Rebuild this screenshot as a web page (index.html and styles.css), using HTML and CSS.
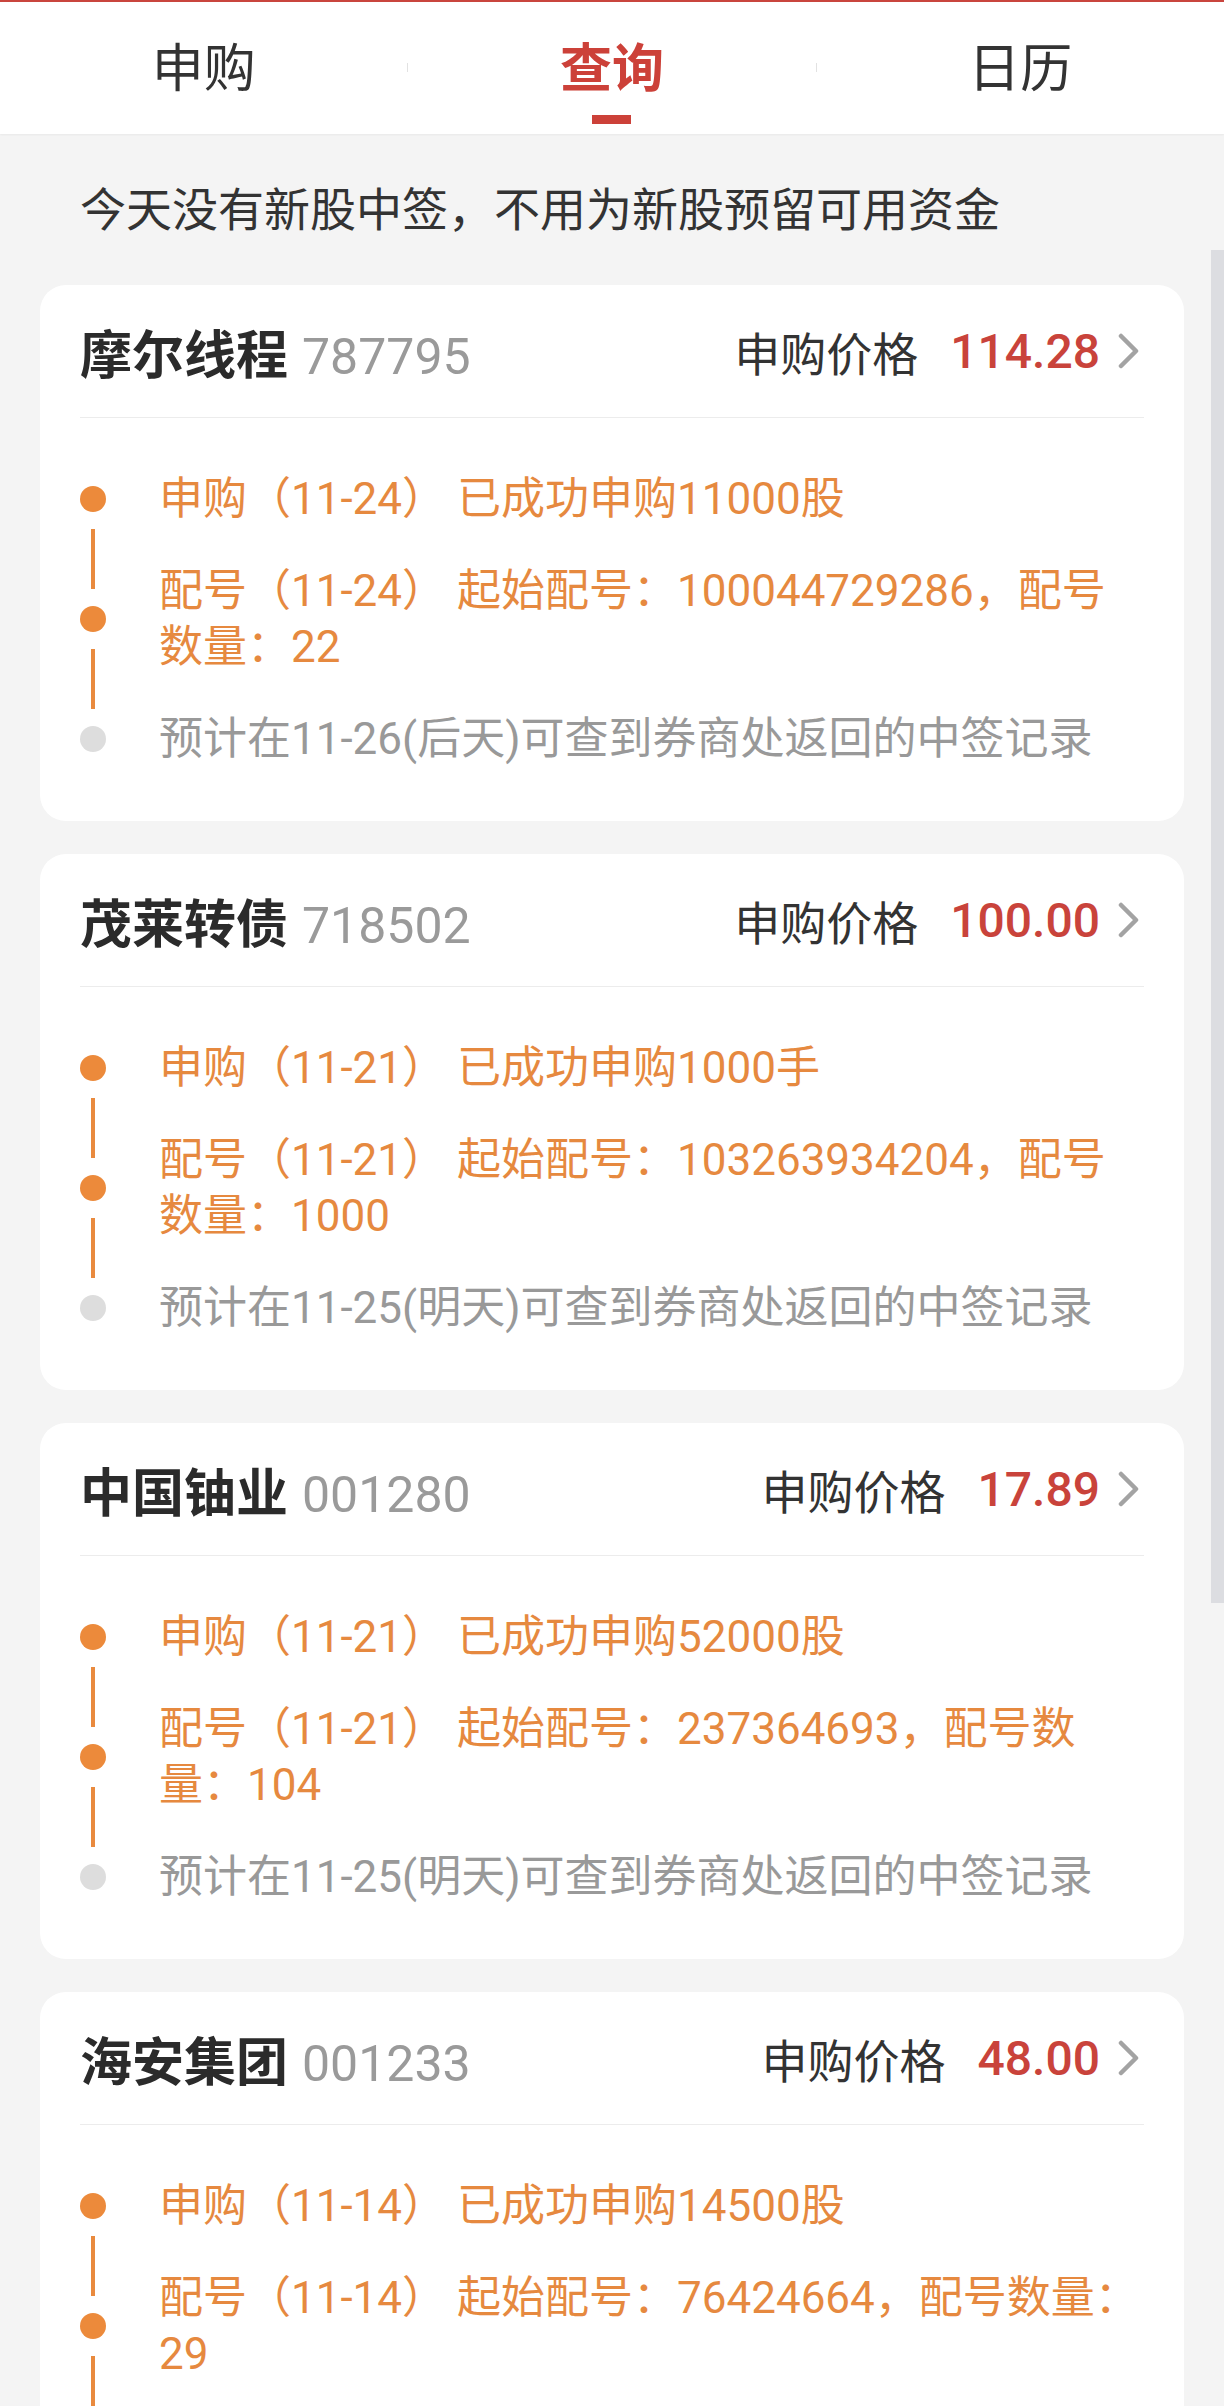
FILE: index.html
```html
<!DOCTYPE html>
<html>
<head>
    <meta charset="utf-8">
    <link rel="stylesheet" href="styles.css">
</head>
<body>

    <div class="tabs">
        <div class="tab">申购</div>
        <span class="sep"></span>
        <div class="tab active">查询</div>
        <span class="sep"></span>
        <div class="tab">日历</div>
    </div>

    <p class="notice">今天没有新股中签，不用为新股预留可用资金</p>

    <div class="list">
        <div class="card">
            <div class="card-head">
                <div class="stock"><span class="name">摩尔线程</span><span class="code">787795</span></div>
                <div class="price">
                    <span class="label">申购价格</span>
                    <span class="value">114.28</span>
                    <svg class="arrow" width="21" height="36" viewBox="0 0 21 36"><polyline points="3,3 18,18 3,33" fill="none" stroke="#a3a3a3" stroke-width="4.5" stroke-linecap="round" stroke-linejoin="round"/></svg>
                </div>
            </div>
            <ul class="steps">
                <li class="step"><span class="mark"><i></i></span><p>申购（11-24） 已成功申购11000股</p></li>
                <li class="step"><span class="mark"><i></i></span><p>配号（11-24） 起始配号：100044729286，配号数量：22</p></li>
                <li class="step wait"><span class="mark"><i></i></span><p>预计在11-26(后天)可查到券商处返回的中签记录</p></li>
            </ul>
        </div>

        <div class="card">
            <div class="card-head">
                <div class="stock"><span class="name">茂莱转债</span><span class="code">718502</span></div>
                <div class="price">
                    <span class="label">申购价格</span>
                    <span class="value">100.00</span>
                    <svg class="arrow" width="21" height="36" viewBox="0 0 21 36"><polyline points="3,3 18,18 3,33" fill="none" stroke="#a3a3a3" stroke-width="4.5" stroke-linecap="round" stroke-linejoin="round"/></svg>
                </div>
            </div>
            <ul class="steps">
                <li class="step"><span class="mark"><i></i></span><p>申购（11-21） 已成功申购1000手</p></li>
                <li class="step"><span class="mark"><i></i></span><p>配号（11-21） 起始配号：103263934204，配号数量：1000</p></li>
                <li class="step wait"><span class="mark"><i></i></span><p>预计在11-25(明天)可查到券商处返回的中签记录</p></li>
            </ul>
        </div>

        <div class="card">
            <div class="card-head">
                <div class="stock"><span class="name">中国铀业</span><span class="code">001280</span></div>
                <div class="price">
                    <span class="label">申购价格</span>
                    <span class="value">17.89</span>
                    <svg class="arrow" width="21" height="36" viewBox="0 0 21 36"><polyline points="3,3 18,18 3,33" fill="none" stroke="#a3a3a3" stroke-width="4.5" stroke-linecap="round" stroke-linejoin="round"/></svg>
                </div>
            </div>
            <ul class="steps">
                <li class="step"><span class="mark"><i></i></span><p>申购（11-21） 已成功申购52000股</p></li>
                <li class="step"><span class="mark"><i></i></span><p>配号（11-21） 起始配号：237364693，配号数量：104</p></li>
                <li class="step wait"><span class="mark"><i></i></span><p>预计在11-25(明天)可查到券商处返回的中签记录</p></li>
            </ul>
        </div>

        <div class="card">
            <div class="card-head">
                <div class="stock"><span class="name">海安集团</span><span class="code">001233</span></div>
                <div class="price">
                    <span class="label">申购价格</span>
                    <span class="value">48.00</span>
                    <svg class="arrow" width="21" height="36" viewBox="0 0 21 36"><polyline points="3,3 18,18 3,33" fill="none" stroke="#a3a3a3" stroke-width="4.5" stroke-linecap="round" stroke-linejoin="round"/></svg>
                </div>
            </div>
            <ul class="steps">
                <li class="step"><span class="mark"><i></i></span><p>申购（11-14） 已成功申购14500股</p></li>
                <li class="step"><span class="mark"><i></i></span><p>配号（11-14） 起始配号：76424664，配号数量：29</p></li>
                <li class="step wait"><span class="mark"><i></i></span><p>预计在11-18可查到券商处返回的中签记录</p></li>
            </ul>
        </div>
    </div>

    <div class="scrollbar"></div>

</body>
</html>
```

FILE: styles.css
```css
body { margin: 0; background: #f4f4f4; font-family: Roboto, "Noto Sans CJK SC", sans-serif; color: #333; }

/* top tabs */
.tabs { display: flex; height: 132px; background: white; border-top: 2px solid #c9453e; box-shadow: 0 1px 2px rgba(0, 0, 0, 0.05); }
.tab { flex: 1; display: flex; flex-direction: column; align-items: center; padding-top: 38px; font-size: 52px; line-height: 60px; }
.tab.active { color: #cc4139; font-weight: bold; }
.tab.active::after { content: ""; width: 39px; height: 9px; margin-top: 15px; background: #cc4139; }
.sep { width: 1px; height: 9px; margin-top: 61px; background: #e2e2e2; }

.notice { margin: 0; padding: 44px 80px 43px; font-size: 46px; line-height: 64px; }

/* cards */
.list { padding: 0 40px; }
.card { background: white; border-radius: 26px; padding: 0 40px; margin-bottom: 33px; }
.card-head { display: flex; align-items: center; justify-content: space-between; height: 132px; border-bottom: 1px solid #ececec; }
.name { font-size: 52px; font-weight: bold; color: #2b2b2b; }
.code { font-size: 50px; color: #9a9a9a; margin-left: 14px; }
.price { display: flex; align-items: center; }
.label { font-size: 46px; }
.value { font-size: 48px; font-weight: 500; color: #c9433b; margin-left: 32px; }
.arrow { margin: 0 5px 0 18px; }

/* timeline */
.steps { list-style: none; margin: 0; padding: 35px 0 36px; }
.step { display: flex; }
.mark { flex-shrink: 0; width: 26px; margin-right: 53px; display: flex; flex-direction: column; align-items: center; }
.mark::before, .mark::after { content: ""; flex: 1; width: 4px; background: #e98a3e; }
.mark::before { margin-bottom: 17px; }
.mark::after { margin-top: 17px; }
.step:first-child .mark::before, .step:last-child .mark::after { visibility: hidden; }
.mark i { width: 26px; height: 26px; border-radius: 50%; background: #ec8a3b; }
.step p { margin: 0; padding: 18px 0; font-size: 44px; line-height: 56px; color: #e6893f; }
.step.wait .mark i { background: #dddddd; }
.step.wait p { color: #999; }

.scrollbar { position: fixed; top: 250px; right: 0; width: 13px; height: 1353px; background: #dcdde1; }
```
